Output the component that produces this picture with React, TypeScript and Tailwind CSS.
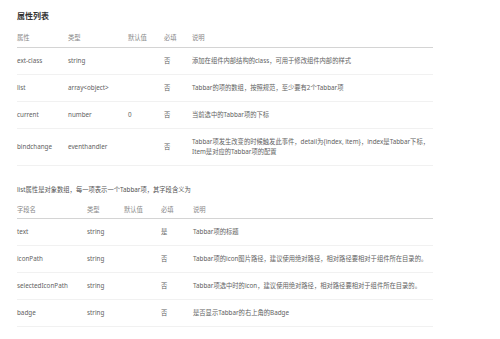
const font = { fontFamily: '"Noto Sans", "Noto Sans CJK SC", sans-serif' };

type Row = string[];

const attrCols = "grid-cols-[51px_60px_36px_28px_1fr]";
const itemCols = "grid-cols-[70px_37px_37px_32px_1fr]";

const attrHead = ["属性", "类型", "默认值", "必填", "说明"];
const attrRows: Row[] = [
  ["ext-class", "string", "", "否", "添加在组件内部结构的class，可用于修改组件内部的样式"],
  ["list", "array<object>", "", "否", "Tabbar的项的数组，按照规范，至少要有2个Tabbar项"],
  ["current", "number", "0", "否", "当前选中的Tabbar项的下标"],
  [
    "bindchange",
    "eventhandler",
    "",
    "否",
    "Tabbar项发生改变的时候触发此事件，detail为{index, item}，index是Tabbar下标，\nItem是对应的Tabbar项的配置",
  ],
];

const itemHead = ["字段名", "类型", "默认值", "必填", "说明"];
const itemRows: Row[] = [
  ["text", "string", "", "是", "Tabbar项的标题"],
  ["iconPath", "string", "", "否", "Tabbar项的icon图片路径，建议使用绝对路径，相对路径要相对于组件所在目录的。"],
  ["selectedIconPath", "string", "", "否", "Tabbar项选中时的icon，建议使用绝对路径，相对路径要相对于组件所在目录的。"],
  ["badge", "string", "", "否", "是否显示Tabbar的右上角的Badge"],
];

function Table({ cols, head, rows }: { cols: string; head: string[]; rows: Row[] }) {
  return (
    <div className="w-[416px]">
      <div className={`grid ${cols} items-center h-[19px] border-b-[1.5px] border-[#d4d4d4] text-[#888]`}>
        {head.map((h) => (
          <div key={h}>{h}</div>
        ))}
      </div>
      {rows.map((r) => (
        <div
          key={r[0]}
          className={`grid ${cols} items-center min-h-[27px] py-[7.5px] border-b border-[#f1f1f1] text-[#626262]`}
        >
          {r.map((c, i) => (
            <div key={i} className="whitespace-pre-line leading-[10.7px]">
              {c}
            </div>
          ))}
        </div>
      ))}
    </div>
  );
}

export default function App() {
  return (
    <div className="w-[500px] h-[339px] bg-white pl-[17px] text-[6.3px] overflow-hidden" style={font}>
      <h2 className="pt-[11px] text-[8px] leading-[10px] font-bold text-[#333]">属性列表</h2>
      <div className="mt-[8px]">
        <Table cols={attrCols} head={attrHead} rows={attrRows} />
      </div>
      <p className="mt-[19px] leading-[10px] text-[#555]">list属性是对象数组，每一项表示一个Tabbar项，其字段含义为</p>
      <div className="mt-[5px]">
        <Table cols={itemCols} head={itemHead} rows={itemRows} />
      </div>
    </div>
  );
}
